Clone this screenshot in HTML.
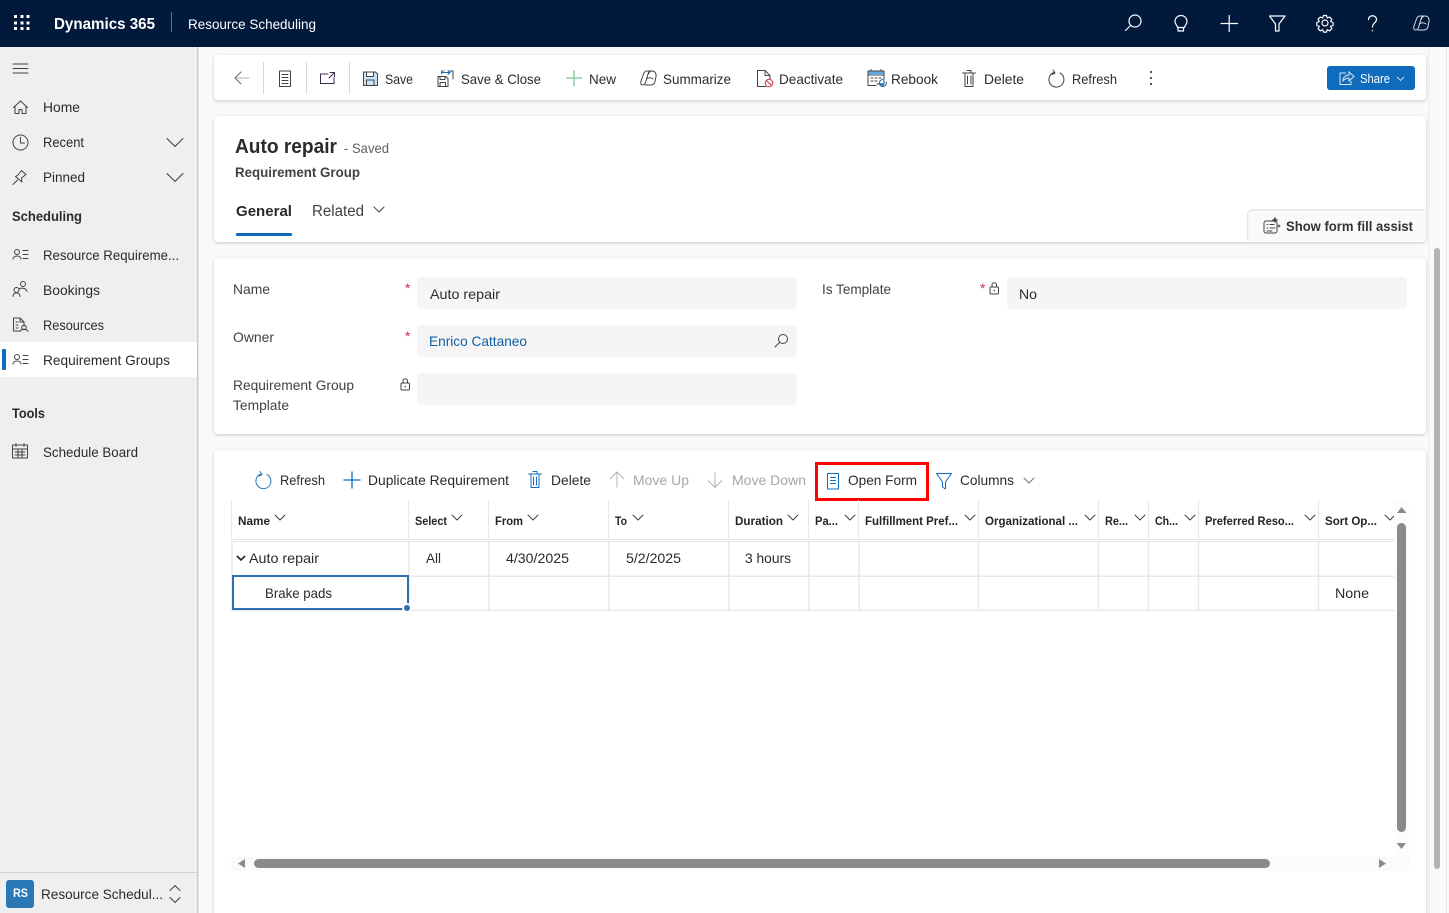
<!DOCTYPE html>
<html><head><meta charset="utf-8"><title>Resource Scheduling</title>
<style>
html,body{margin:0;padding:0;width:1449px;height:913px;overflow:hidden;background:#fafafa}
svg{display:block}
text{font-family:"Liberation Sans",sans-serif;font-size:14px;fill:#2b2b2b;white-space:pre}
.b{font-weight:bold}
.h{font-weight:bold;font-size:12px;fill:#242424}
.d{fill:#a6a6a6}
.i{fill:none;stroke:#424242;stroke-width:1;stroke-linecap:round;stroke-linejoin:round}
.w{fill:none;stroke:#fff;stroke-width:1.2;stroke-linecap:round;stroke-linejoin:round}
.bl{fill:none;stroke:#0f6cbd;stroke-width:1;stroke-linecap:round;stroke-linejoin:round}
.c{fill:none;stroke:#424242;stroke-width:1;stroke-linecap:round;stroke-linejoin:round}
</style></head><body>
<svg width="1449" height="913" viewBox="0 0 1449 913" xmlns="http://www.w3.org/2000/svg">
<defs><filter id="s" x="-2%" y="-10%" width="104%" height="120%"><feDropShadow dx="0" dy="1" stdDeviation="1.5" flood-color="#000" flood-opacity=".2"/></filter></defs>
<rect width="1449" height="913" fill="#fafafa"/>

<!-- side nav -->
<rect x="0" y="47" width="197" height="866" fill="#efefef"/>
<rect x="197" y="47" width="1.5" height="866" fill="#c9c9c9"/>
<rect x="0" y="342" width="197" height="35" fill="#fff"/>
<rect x="2" y="349" width="4" height="21" rx="1" fill="#0f6cbd"/>
<rect x="0" y="872" width="197" height="1" fill="#d0d0d0"/>

<!-- top bar -->
<rect width="1449" height="47" fill="#011a3c"/>
<g fill="#fff"><rect x="14" y="15" width="3" height="3"/><rect x="20.500" y="15" width="3" height="3"/><rect x="26.500" y="15" width="3" height="3"/><rect x="14" y="21.500" width="3" height="3"/><rect x="20.500" y="21.500" width="3" height="3"/><rect x="26.500" y="21.500" width="3" height="3"/><rect x="14" y="27" width="3" height="3"/><rect x="20.500" y="27" width="3" height="3"/><rect x="26.500" y="27" width="3" height="3"/></g>
<text x="54" y="29" class="b" style="font-size:15.500px;fill:#fff" textLength="101" lengthAdjust="spacingAndGlyphs">Dynamics 365</text>
<rect x="171" y="12" width="1" height="20" fill="#5d6f88"/>
<text x="188" y="29" style="fill:#fff" textLength="128" lengthAdjust="spacingAndGlyphs">Resource Scheduling</text>
<g class="w">
<circle cx="1135" cy="21" r="6"/><path d="M1130.500 25.500L1125.500 30.500"/>
<path d="M1177.500 27.500c0-2-2.500-3-2.500-6a6 6 0 0 1 12 0c0 3-2.500 4-2.500 6zM1178 27.500v3.500h5.500v-3.500"/>
<path d="M1221 23.500h16.500M1229.200 15.500v16"/>
<path d="M1269.500 16h15.500l-6 8v7h-3.500v-7z"/>
<circle cx="1325" cy="23" r="3"/><path d="M1323.500 15.500h3l.7 2.500 2.400-1 2.200 2.200-1.200 2.300 2.500 1v3l-2.500.8 1.200 2.400-2.200 2.200-2.400-1.200-.7 2.400h-3l-.8-2.400-2.400 1.200-2.200-2.200 1.200-2.400-2.500-.8v-3l2.500-1-1.200-2.300 2.200-2.200 2.400 1z"/>
<path d="M1368.500 19.500c0-5 8-5 8 0 0 3.500-4 3.500-4 7.500M1372.500 30.500v.3"/>
<g transform="translate(1421 23)" style="stroke:#d8dde4;stroke-width:1">
<path d="M-7 3L-4.500-4C-3.800-6-2.500-7-1-7H3C1.500-7 .5-6 0-4L-2 3C-2.500 5.500-4 7-5.500 7-7 7-7.800 5.500-7 3z"/>
<path d="M-3 7H3C5 7 6.500 5.500 7 3.500L8-1.500C8.500-4.500 7-7 4-7 2.500-7 1-6 .5-4M-1.500 1C.5-.5 3-.5 5 1"/>
</g>
</g>

<!-- nav items -->
<g class="i">
<path d="M13 68h15M13 63.500h15M13 72.500h15" transform="translate(0 .5)" style="stroke-width:.9"/>
<path d="M13.500 107.500l7-6.500 7 6.500M15 106.500v7h4v-4h3v4h4v-7"/>
<circle cx="20.500" cy="142.500" r="7.500"/><path d="M20.500 137.500v5.500h4"/>
<path d="M13 184.500l4.500-4.500M15.500 176.500l6.500 5.500-.5-4 4.500-3.500-4.500-4-3.500 4.500z"/>
<path d="M167 138.500l8 8 8-8M167 173.500l8 8 8-8" style="stroke-width:1.100"/>
<circle cx="17" cy="252" r="2.500"/><path d="M13 259c0-4 8-4 8 0M23 250.500h5M23 254.500h5M23 258.500h5"/>
<circle cx="16.500" cy="290" r="2.500"/><circle cx="23" cy="284" r="2.500"/><path d="M13 296.500c0-5 7-5 7 0M19 289.500c1-2 7-2 8 2"/>
<path d="M20 318h-6.500v13h6M20 318l4 4v4M20 318v4h4M16 322h2M16 325h2M16 328h2"/><circle cx="24" cy="327.500" r="2.300"/><path d="M20 331.500c1-3 7-3 8 0"/>
<circle cx="17" cy="357" r="2.500"/><path d="M13 364c0-4 8-4 8 0M23 355.500h5M23 359.500h5M23 363.500h5"/>
<path d="M12.500 445h15v13h-15zM12.500 449h15M16 443.500v3M24 443.500v3M15 452h10M15 455h10M18 450v7M22 450v7"/>
<path d="M170 890.500l5-5 5 5M170 897.500l5 5 5-5"/>
</g>
<text x="43" y="112" textLength="37" lengthAdjust="spacingAndGlyphs">Home</text>
<text x="43" y="147" textLength="41" lengthAdjust="spacingAndGlyphs">Recent</text>
<text x="43" y="182" textLength="42" lengthAdjust="spacingAndGlyphs">Pinned</text>
<text x="12" y="221" class="b" textLength="70" lengthAdjust="spacingAndGlyphs">Scheduling</text>
<text x="43" y="260" textLength="136" lengthAdjust="spacingAndGlyphs">Resource Requireme...</text>
<text x="43" y="295" textLength="57" lengthAdjust="spacingAndGlyphs">Bookings</text>
<text x="43" y="330" textLength="61" lengthAdjust="spacingAndGlyphs">Resources</text>
<text x="43" y="365" textLength="127" lengthAdjust="spacingAndGlyphs">Requirement Groups</text>
<text x="12" y="418" class="b" textLength="33" lengthAdjust="spacingAndGlyphs">Tools</text>
<text x="43" y="457" textLength="95" lengthAdjust="spacingAndGlyphs">Schedule Board</text>
<rect x="6" y="880" width="28" height="28" rx="3" fill="#2b78b7"/>
<text x="13" y="897" class="b" style="font-size:11.500px;fill:#fff" textLength="15" lengthAdjust="spacingAndGlyphs">RS</text>
<text x="41" y="899" textLength="122" lengthAdjust="spacingAndGlyphs">Resource Schedul...</text>

<!-- cards -->
<g fill="#fff" filter="url(#s)">
<rect x="214" y="55" width="1212" height="45" rx="4"/>
<rect x="214" y="116" width="1212" height="126" rx="4"/>
<rect x="214" y="258" width="1212" height="176" rx="4"/>
<rect x="214" y="450" width="1212" height="480" rx="4"/>
</g>

<!-- page scrollbar -->
<rect x="1428.500" y="47" width="1" height="866" fill="#e8e8e8"/>
<rect x="1446" y="47" width="1" height="866" fill="#e8e8e8"/>
<rect x="1434" y="248" width="6" height="621" rx="3" fill="#b3b3b3"/>

<!-- command bar -->
<g fill="#d6d6d6"><rect x="263" y="62" width="1" height="32"/><rect x="306" y="62" width="1" height="32"/><rect x="349" y="62" width="1" height="32"/></g>
<g class="i">
<path d="M235 78h14" style="stroke:#b0b0b0"/><path d="M241 72l-6 6 6 6" style="stroke:#6b6b6b"/>
<path d="M279.500 71h11v15.500h-11zM282 74.500h6M282 77.500h6M282 80.500h6M282 83.500h6"/>
<path d="M328 74h-7.500v9.500H334v-6" style="stroke:#3b2a4a"/><path d="M329 78l5-5M330 72.500h4.500v4" style="stroke:#3b2a4a"/>
<path d="M363.500 72h12l2 2v11.500h-14zM366.500 72v4.500h7V72M366.500 85.500V80h7.500v5.500" fill="#cfe4f7" style="fill:#cfe4f7"/>
<path d="M438 76.500h8l2 2v8h-10zM440 76.500v3h5v-3M440 86.500v-4h5.500v4"/><path d="M444 71h-2.500v3M442 72.500h8M448 70.500l2.200 2-2.200 2" style="stroke:#0f6cbd"/><path d="M450 71h3v8"/>
<g transform="translate(648 78)">
<path d="M-7 3L-4.500-4C-3.800-6-2.500-7-1-7H3C1.500-7 .5-6 0-4L-2 3C-2.500 5.500-4 7-5.500 7-7 7-7.800 5.500-7 3z"/>
<path d="M-3 7H3C5 7 6.500 5.500 7 3.500L8-1.500C8.500-4.500 7-7 4-7 2.500-7 1-6 .5-4M-1.500 1C.5-.5 3-.5 5 1"/>
</g>
<path d="M765 70.500h-7.500v16h8M765 70.500l5 5v4M765 70.500v5h5"/>
<path d="M868 71h16v13h-7M868 71v14.500h8M868 75h16M871 69.500v3M881 69.500v3M871 78h2M875 78h2M879 78h2M871 81h2M875 81h2"/>
<path d="M962.500 73h13M965 73v13.500h8V73M967 70.500h4v2.500M967.500 76v8M971 76v8"/>
<path d="M1054 72.500a7.500 7.500 0 1 0 6 .5M1053 70l2 3-3 1.500"/>
</g>
<rect x="868.500" y="71.500" width="15" height="3.500" fill="#6aa5d8"/>
<path d="M886 81.500a3.500 3.500 0 1 1-3-2M884 85a3 3 0 0 1-4-2" fill="none" stroke="#0f6cbd" stroke-width="1"/>
<circle cx="769" cy="83" r="3.800" fill="#fff" stroke="#d13438" stroke-width="1"/><path d="M766.500 80.500l5 5" stroke="#d13438"/>
<path d="M566 78h16M574 70v16" stroke="#7fc79a" stroke-width="1.300" fill="none"/>
<g fill="#424242"><circle cx="1151" cy="72" r="1.100"/><circle cx="1151" cy="78" r="1.100"/><circle cx="1151" cy="84" r="1.100"/></g>
<text x="385" y="84" textLength="28" lengthAdjust="spacingAndGlyphs">Save</text>
<text x="461" y="84" textLength="80" lengthAdjust="spacingAndGlyphs">Save &amp; Close</text>
<text x="589" y="84" textLength="27" lengthAdjust="spacingAndGlyphs">New</text>
<text x="663" y="84" textLength="68" lengthAdjust="spacingAndGlyphs">Summarize</text>
<text x="779" y="84" textLength="64" lengthAdjust="spacingAndGlyphs">Deactivate</text>
<text x="891" y="84" textLength="47" lengthAdjust="spacingAndGlyphs">Rebook</text>
<text x="984" y="84" textLength="40" lengthAdjust="spacingAndGlyphs">Delete</text>
<text x="1072" y="84" textLength="45" lengthAdjust="spacingAndGlyphs">Refresh</text>
<rect x="1327" y="66" width="88" height="24" rx="3" fill="#0f6cbd"/>
<path d="M1346 73h-6v11.500h11V81M1343 81c0-4 3-6 6-6v-3l5 4.500-5 4.500v-3c-2 0-4 .5-6 3z" fill="none" stroke="#d7e8f7" stroke-width="1"/>
<text x="1360" y="83" style="font-size:12.500px;fill:#fff" textLength="30" lengthAdjust="spacingAndGlyphs">Share</text>
<path d="M1397 77l3.500 3.500 3.500-3.500" fill="none" stroke="#cfe4f7" stroke-width=".9"/>

<!-- header -->
<text x="235" y="153" class="b" style="font-size:20px" textLength="102" lengthAdjust="spacingAndGlyphs">Auto repair</text>
<text x="344" y="153" style="fill:#616161" textLength="45" lengthAdjust="spacingAndGlyphs">- Saved</text>
<text x="235" y="177" class="b" style="fill:#424242" textLength="125" lengthAdjust="spacingAndGlyphs">Requirement Group</text>
<text x="236" y="216" class="b" style="font-size:15px" textLength="56" lengthAdjust="spacingAndGlyphs">General</text>
<text x="312" y="216" style="font-size:15.500px;fill:#424242" textLength="52" lengthAdjust="spacingAndGlyphs">Related</text>
<path d="M374 207l5 5 5-5" class="c"/>
<rect x="236" y="233" width="56" height="3" rx="1" fill="#0f6cbd"/>
<path d="M1247 240v-25a5 5 0 0 1 5-5h174v31h-179z" fill="#fafafa"/>
<path d="M1247.500 240v-25a5 5 0 0 1 5-5H1425" fill="none" stroke="#e6e6e6" stroke-width="1.500"/>
<g class="i"><rect x="1264" y="221" width="13" height="12" rx="2"/><path d="M1270 224.500h4M1270 228h5M1267 224.500h.8M1267 228h.8M1267 231h5"/></g>
<path d="M1275 216.500l1 2.500 2.500 1-2.500 1-1 2.500-1-2.500-2.500-1 2.500-1zM1279 224l.6 1.400 1.400.6-1.400.6-.6 1.400-.6-1.400-1.400-.6 1.400-.6z" fill="#424242"/>
<text x="1286" y="231" class="b" style="fill:#333" textLength="127" lengthAdjust="spacingAndGlyphs">Show form fill assist</text>

<!-- form -->
<text x="233" y="294" style="fill:#424242" textLength="37" lengthAdjust="spacingAndGlyphs">Name</text>
<text x="233" y="342" style="fill:#424242" textLength="41" lengthAdjust="spacingAndGlyphs">Owner</text>
<text x="233" y="390" style="fill:#424242" textLength="121" lengthAdjust="spacingAndGlyphs">Requirement Group</text>
<text x="233" y="410" style="fill:#424242" textLength="56" lengthAdjust="spacingAndGlyphs">Template</text>
<text x="822" y="294" style="fill:#424242" textLength="69" lengthAdjust="spacingAndGlyphs">Is Template</text>
<text x="405" y="293" style="fill:#c4314b">*</text>
<text x="405" y="341" style="fill:#c4314b">*</text>
<text x="980" y="293" style="fill:#c4314b">*</text>
<g fill="#f5f5f5"><rect x="417" y="277" width="380" height="32" rx="4"/><rect x="417" y="325" width="380" height="32" rx="4"/><rect x="417" y="373" width="380" height="32" rx="4"/><rect x="1007" y="277" width="400" height="32" rx="4"/></g>
<g class="i"><rect x="401" y="383" width="8.500" height="7" rx="1"/><path d="M403 383v-2a2.200 2.200 0 0 1 4.500 0v2"/><rect x="990" y="287" width="8.500" height="7" rx="1"/><path d="M992 287v-2a2.200 2.200 0 0 1 4.500 0v2"/>
<circle cx="783" cy="339" r="4.500"/><path d="M779.500 342.500L775 347"/></g>
<circle cx="405.200" cy="386.500" r=".8" fill="#424242"/><circle cx="994.200" cy="290.500" r=".8" fill="#424242"/>
<text x="430" y="299" textLength="70" lengthAdjust="spacingAndGlyphs">Auto repair</text>
<text x="429" y="346" style="fill:#115ea3" textLength="98" lengthAdjust="spacingAndGlyphs">Enrico Cattaneo</text>
<text x="1019" y="299" textLength="18" lengthAdjust="spacingAndGlyphs">No</text>

<!-- grid commands -->
<g class="bl">
<path d="M261 474a7.500 7.500 0 1 0 6 .5M260 471.500l2 3-3 1.500" style="stroke:#2b78b7"/>
<path d="M344 480h16M352 472v16" style="stroke-width:1.300"/>
<path d="M528.500 474h13M531 474v13.500h8V474M533 471.500h4v2.500M533.500 477v8M536.500 477v8"/>
<path d="M827.500 473.500h11v15.500h-11zM830.500 477.500h5M830.500 480.500h5M830.500 483.500h5"/>
<path d="M936.500 473.500h15l-6 8.500v7l-3-2v-5z"/>
</g>
<path d="M617 487.500v-15M610 479l7-7 7 7M715 472.500v15M708 480.500l7 7 7-7" fill="none" stroke="#b3b3b3" stroke-width="1"/>
<text x="280" y="485" textLength="45" lengthAdjust="spacingAndGlyphs">Refresh</text>
<text x="368" y="485" textLength="141" lengthAdjust="spacingAndGlyphs">Duplicate Requirement</text>
<text x="551" y="485" textLength="40" lengthAdjust="spacingAndGlyphs">Delete</text>
<text x="633" y="485" class="d" textLength="56" lengthAdjust="spacingAndGlyphs">Move Up</text>
<text x="732" y="485" class="d" textLength="74" lengthAdjust="spacingAndGlyphs">Move Down</text>
<text x="848" y="485" textLength="69" lengthAdjust="spacingAndGlyphs">Open Form</text>
<text x="960" y="485" textLength="54" lengthAdjust="spacingAndGlyphs">Columns</text>
<path d="M1024 478l5 5 5-5" class="c" style="stroke:#707070"/>
<rect x="816.500" y="463.500" width="111" height="36" fill="none" stroke="#f00" stroke-width="3"/>

<!-- grid lines -->
<path fill="none" stroke="#e8e8e8" stroke-width="1" d="M231.500 500v40M408.500 500v40M488.500 500v40M608.500 500v40M728.500 500v40M808.500 500v40M858.500 500v40M978.500 500v40M1098.500 500v40M1148.500 500v40M1198.500 500v40M1318.500 500v40"/>
<path fill="none" stroke="#e8e8e8" stroke-width="1.500" d="M232 541v69M409 541v69M489 541v69M609 541v69M729 541v69M809 541v69M859 541v69M978.500 541v69M1098.500 541v69M1148.500 541v69M1198.500 541v69M1318.500 541v69"/>
<path fill="none" stroke="#e8e8e8" stroke-width="1" d="M231 539.500h1163M231 541.500h1163"/>
<path fill="none" stroke="#e8e8e8" stroke-width="1.300" d="M231 576.300h1163M231 610.300h1163"/>
<!-- grid header -->
<text x="238" y="525" class="h" textLength="32" lengthAdjust="spacingAndGlyphs">Name</text>
<text x="415" y="525" class="h" textLength="32" lengthAdjust="spacingAndGlyphs">Select</text>
<text x="495" y="525" class="h" textLength="28" lengthAdjust="spacingAndGlyphs">From</text>
<text x="615" y="525" class="h" textLength="12" lengthAdjust="spacingAndGlyphs">To</text>
<text x="735" y="525" class="h" textLength="48" lengthAdjust="spacingAndGlyphs">Duration</text>
<text x="815" y="525" class="h" textLength="23" lengthAdjust="spacingAndGlyphs">Pa...</text>
<text x="865" y="525" class="h" textLength="93" lengthAdjust="spacingAndGlyphs">Fulfillment Pref...</text>
<text x="985" y="525" class="h" textLength="93" lengthAdjust="spacingAndGlyphs">Organizational ...</text>
<text x="1105" y="525" class="h" textLength="23" lengthAdjust="spacingAndGlyphs">Re...</text>
<text x="1155" y="525" class="h" textLength="23" lengthAdjust="spacingAndGlyphs">Ch...</text>
<text x="1205" y="525" class="h" textLength="89" lengthAdjust="spacingAndGlyphs">Preferred Reso...</text>
<text x="1325" y="525" class="h" textLength="52" lengthAdjust="spacingAndGlyphs">Sort Op...</text>
<path class="c" d="M275 515l5 5 5-5M452 515l5 5 5-5M528 515l5 5 5-5M633 515l5 5 5-5M788 515l5 5 5-5M845 515l5 5 5-5M965 515l5 5 5-5M1085 515l5 5 5-5M1135 515l5 5 5-5M1185 515l5 5 5-5M1305 515l5 5 5-5M1385 515l5 5 5-5"/>
<!-- grid cells -->
<path d="M237 556l4 4 4-4" fill="none" stroke="#242424" stroke-width="1.600"/>
<text x="249" y="563" textLength="70" lengthAdjust="spacingAndGlyphs">Auto repair</text>
<text x="426" y="563" textLength="15" lengthAdjust="spacingAndGlyphs">All</text>
<text x="506" y="563" textLength="63" lengthAdjust="spacingAndGlyphs">4/30/2025</text>
<text x="626" y="563" textLength="55" lengthAdjust="spacingAndGlyphs">5/2/2025</text>
<text x="745" y="563" textLength="46" lengthAdjust="spacingAndGlyphs">3 hours</text>
<text x="1335" y="598" textLength="34" lengthAdjust="spacingAndGlyphs">None</text>
<rect x="233" y="576" width="175" height="33" fill="#fff" stroke="#2f6fb0" stroke-width="2"/>
<text x="265" y="598" textLength="67" lengthAdjust="spacingAndGlyphs">Brake pads</text>
<circle cx="407" cy="608" r="5" fill="#fff"/><circle cx="407" cy="608" r="3" fill="#2f6fb0"/>

<!-- grid scrollbars -->
<rect x="1394" y="500" width="15" height="370" fill="#fcfcfc"/>
<rect x="231" y="857" width="1178" height="14" fill="#fafafa"/>
<rect x="1397" y="523" width="9" height="309" rx="4.500" fill="#8a8a8a"/>
<path d="M1401.500 507l5 6h-9.500zM1401.500 849l-5-6h9.500z" fill="#8a8a8a"/>
<rect x="254" y="859" width="1016" height="9" rx="4.500" fill="#8a8a8a"/>
<path d="M238 863.500l7-4.500v9zM1386 863.500l-7-4.500v9z" fill="#8a8a8a"/>
</svg>
</body></html>
